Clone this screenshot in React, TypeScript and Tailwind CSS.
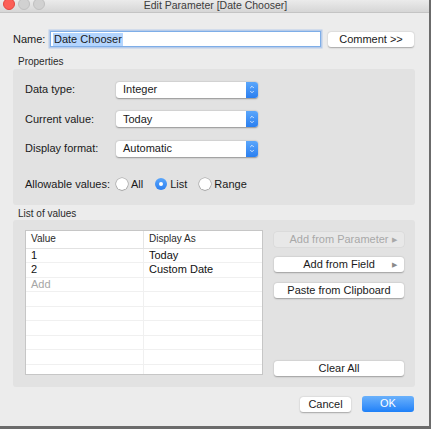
import { ChevronDown, ChevronUp } from 'lucide-react'

const font = { fontFamily: '"Liberation Sans", Arial, sans-serif' }

const Select = ({ value }: { value: string }) => (
  <div className="w-[142px] h-[16px] flex items-center bg-white rounded-[3px] shadow-[0_0.5px_1.5px_rgba(0,0,0,0.35)] overflow-hidden">
    <span className="flex-1 pl-[7px] text-[11px] leading-none text-[#1a1a1a]">{value}</span>
    <div className="w-[12px] h-full flex flex-col items-center justify-center bg-gradient-to-b from-[#5aa6fb] to-[#2a7ff0]">
      <ChevronUp size={6} strokeWidth={3} className="text-white -mb-[1px]" />
      <ChevronDown size={6} strokeWidth={3} className="text-white" />
    </div>
  </div>
)

const Radio = ({ label, checked }: { label: string; checked?: boolean }) => (
  <div className="flex items-center gap-[3px]">
    {checked ? (
      <span className="w-[12px] h-[12px] rounded-full bg-gradient-to-b from-[#5aa6fb] to-[#2a7ff0] flex items-center justify-center">
        <span className="w-[4px] h-[4px] rounded-full bg-white" />
      </span>
    ) : (
      <span className="w-[12px] h-[12px] rounded-full bg-white shadow-[0_0_0_0.5px_rgba(0,0,0,0.3),0_0.5px_1px_rgba(0,0,0,0.25)]" />
    )}
    <span className="text-[11px] leading-none text-[#1a1a1a]">{label}</span>
  </div>
)

const MacButton = ({
  children,
  disabled,
  arrow,
  className = '',
}: {
  children: React.ReactNode
  disabled?: boolean
  arrow?: boolean
  className?: string
}) => (
  <div
    className={`relative h-[15px] flex items-center justify-center rounded-[3px] text-[11px] leading-none ${
      disabled
        ? 'bg-[#e8e8e8] text-[#a8a8a8] shadow-[0_0_0_0.5px_rgba(0,0,0,0.06)]'
        : 'bg-white text-[#1a1a1a] shadow-[0_0.5px_1.5px_rgba(0,0,0,0.3)]'
    } ${className}`}
  >
    <span>{children}</span>
    {arrow && (
      <span className={`absolute right-[7px] text-[7px] ${disabled ? 'text-[#a8a8a8]' : 'text-[#8a8a8a]'}`}>
        ▶
      </span>
    )}
  </div>
)

const rows = [
  ['1', 'Today'],
  ['2', 'Custom Date'],
  ['Add', ''],
  ['', ''],
  ['', ''],
  ['', ''],
  ['', ''],
  ['', ''],
  ['', ''],
]

export default function App() {
  return (
    <div className="w-[431px] h-[429px] bg-[#6b6b6b] overflow-hidden" style={font}>
      <div className="w-[429px] h-[426px] bg-[#ececec] flex flex-col">
        {/* ── Title bar ─────────────────────────────── */}
        <div className="h-[13px] shrink-0 relative flex items-center bg-gradient-to-b from-[#ebebeb] to-[#d6d6d6] border-b border-[#c4c4c4] overflow-hidden">
          <div className="flex gap-[3px] pl-[3px] -mt-[4px]">
            <span className="w-[12px] h-[12px] rounded-full bg-[#fc5f57] border border-[#e2463f]" />
            <span className="w-[12px] h-[12px] rounded-full bg-[#d1d1d1] border border-[#c0c0c0]" />
            <span className="w-[12px] h-[12px] rounded-full bg-[#d1d1d1] border border-[#c0c0c0]" />
          </div>
          <span className="absolute inset-x-0 top-0 pl-[2px] text-center text-[10.5px] leading-[11px] text-[#3c3c3c]">
            Edit Parameter [Date Chooser]
          </span>
        </div>

        {/* ── Name row ─────────────────────────────── */}
        <div className="flex items-center pl-[13px] pr-[15px] pt-[18px]">
          <span className="text-[11px] text-[#1a1a1a] w-[37px]">Name:</span>
          <div className="w-[271px] h-[16px] bg-white border border-[#7eaee8] shadow-[0_0_0_1.5px_rgba(120,165,230,0.45)] flex items-center pl-[2px]">
            <span className="bg-[#b4d5fe] text-[11px] leading-[13px] text-[#1a1a1a] px-[1px]">Date Chooser</span>
          </div>
          <div className="ml-[7px] w-[86px] h-[15px] flex items-center justify-center bg-white rounded-[3px] shadow-[0_0.5px_1.5px_rgba(0,0,0,0.3)] text-[11px] leading-none text-[#1a1a1a]">
            Comment &gt;&gt;
          </div>
        </div>

        {/* ── Properties ─────────────────────────────── */}
        <div className="pl-[18px] pt-[8px] h-[21px] text-[10px] leading-[12px] text-[#2a2a2a]">Properties</div>
        <div className="mx-[13px] w-[402px] h-[136px] bg-[#e2e2e2] rounded-[3px] pl-[12px] pt-[13px] flex flex-col">
          {[
            ['Data type:', 'Integer'],
            ['Current value:', 'Today'],
            ['Display format:', 'Automatic'],
          ].map(([label, value]) => (
            <div key={label} className="flex items-center h-[16px] mb-[13.5px]">
              <span className="w-[91px] text-[11px] leading-none text-[#1a1a1a]">{label}</span>
              <Select value={value} />
            </div>
          ))}
          <div className="flex items-center h-[16px] mt-[6px]">
            <span className="w-[91px] text-[11px] leading-none text-[#1a1a1a]">Allowable values:</span>
            <div className="flex items-center gap-[12px]">
              <Radio label="All" />
              <Radio label="List" checked />
              <Radio label="Range" />
            </div>
          </div>
        </div>

        {/* ── List of values ─────────────────────────────── */}
        <div className="pl-[18px] pt-[3px] h-[15px] text-[10px] leading-[12px] text-[#2a2a2a]">List of values</div>
        <div className="mx-[13px] w-[402px] h-[167px] bg-[#e2e2e2] rounded-[3px] pl-[12px] pt-[10px] flex gap-[11px]">
          <div className="w-[238px] h-[145px] bg-white border border-[#c6c6c6] overflow-hidden flex flex-col">
            <div className="h-[18px] shrink-0 flex border-b border-[#e2e2e2] text-[10px] leading-none text-[#2a2a2a]">
              <div className="w-[118px] pl-[5px] flex items-center border-r border-[#e6e6e6]">Value</div>
              <div className="flex-1 pl-[5px] flex items-center">Display As</div>
            </div>
            {rows.map(([v, d], i) => (
              <div key={i} className="h-[14.5px] shrink-0 flex border-b border-[#f0f0f0] text-[11px] leading-none">
                <div className={`w-[118px] pl-[5px] flex items-center border-r border-[#f0f0f0] ${v === 'Add' ? 'text-[#a6a6a6]' : 'text-[#111]'}`}>
                  {v}
                </div>
                <div className="flex-1 pl-[5px] flex items-center text-[#111]">{d}</div>
              </div>
            ))}
          </div>
          <div className="w-[130px] flex flex-col pt-[2px] pb-[11px]">
            <MacButton disabled arrow>Add from Parameter</MacButton>
            <MacButton arrow className="mt-[10px]">Add from Field</MacButton>
            <MacButton className="mt-[11px]">Paste from Clipboard</MacButton>
            <MacButton className="mt-auto">Clear All</MacButton>
          </div>
        </div>

        {/* ── Footer ─────────────────────────────── */}
        <div className="flex justify-end gap-[11px] pr-[15px] pt-[10px]">
          <div className="w-[51px] h-[15px] flex items-center justify-center bg-white rounded-[3px] shadow-[0_0.5px_1.5px_rgba(0,0,0,0.3)] text-[11px] leading-none text-[#1a1a1a]">
            Cancel
          </div>
          <div className="w-[52px] h-[16px] -mt-[1px] flex items-center justify-center rounded-[3px] bg-gradient-to-b from-[#6ab1fb] to-[#1c80f8] text-[11px] leading-none text-white">
            OK
          </div>
        </div>
      </div>
    </div>
  )
}
